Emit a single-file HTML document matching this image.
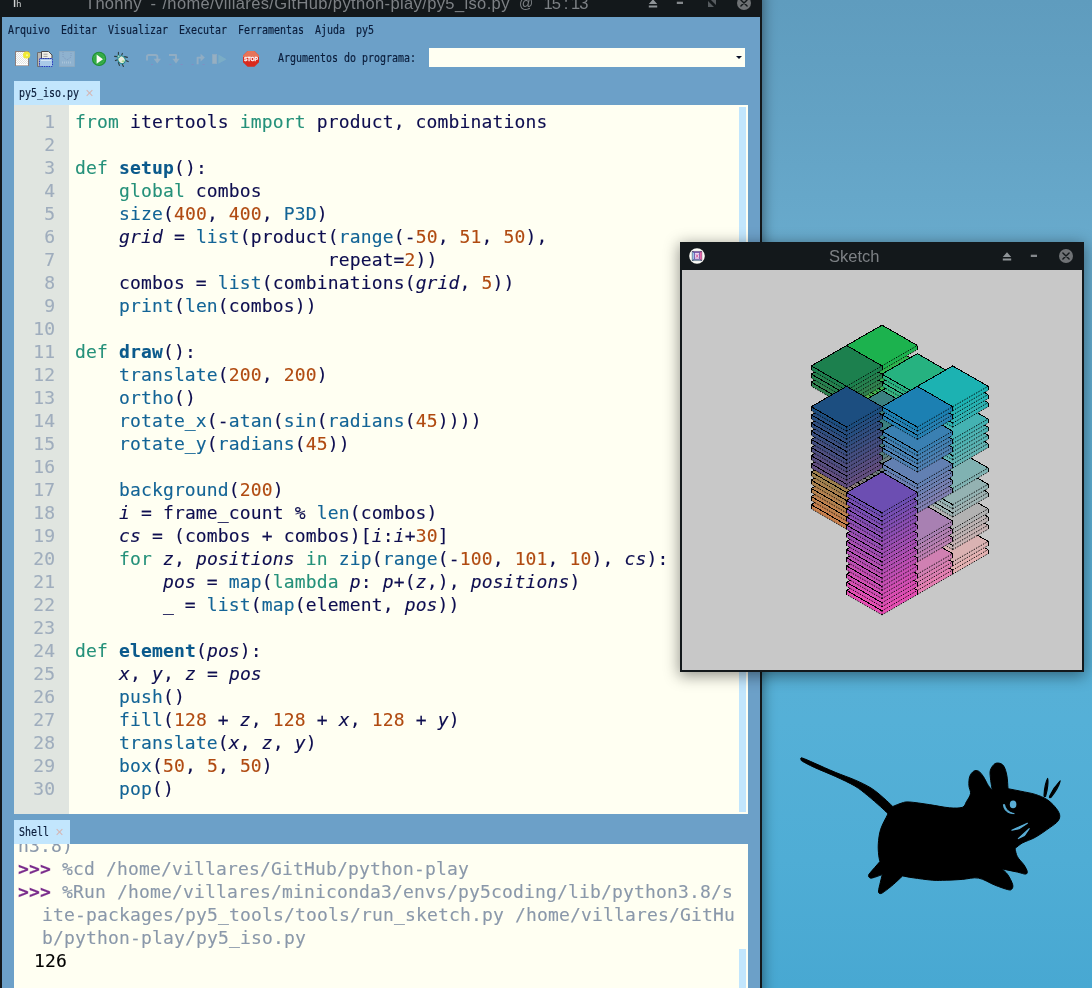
<!DOCTYPE html>
<html lang="pt-BR">
<head>
<meta charset="utf-8">
<title>Thonny - /home/villares/GitHub/python-play/py5_iso.py @ 15:13</title>
<style>
html,body{margin:0;padding:0}
body{width:1092px;height:988px;overflow:hidden;position:relative;background:#52abd3;font-family:"DejaVu Sans Mono","Liberation Mono",monospace}
#desk{position:absolute;left:0;top:0;width:1092px;height:988px;
  background:linear-gradient(180deg,#5f9cbe 0px,#63a2c4 120px,#68aacc 240px,#5eaed2 480px,#55b0d7 720px,#4fadd5 860px,#48a8d2 988px)}
#mouse{position:absolute;left:0;top:0}
#th-shadow{position:absolute;left:0;top:-11px;width:762px;height:1010px;box-shadow:0 2px 12px 1px rgba(0,0,0,.45)}
#th{will-change:transform;position:absolute;left:0;top:-11px;width:762px;height:1010px;background:#13181b}
#th-title{position:absolute;left:0;top:0;width:762px;height:28px;color:#7d8185;font-family:"Liberation Sans","DejaVu Sans",sans-serif}
.tt{position:absolute;top:3px;font-size:16.5px;line-height:22px;white-space:pre}
#th-ico{position:absolute;left:0;top:0;color:#d2d3d4;font-family:"Liberation Sans","DejaVu Sans",sans-serif}
#th-ico span{position:absolute;white-space:pre}
#th-ico .T{left:9.9px;top:3.5px;font-size:15px;line-height:17px;font-weight:normal}
#th-ico .h{left:16.2px;top:10.4px;font-size:9px;line-height:10px}
.wb{position:absolute}
#th-body{position:absolute;left:2px;top:28px;width:758px;height:982px;background:#6ca0c8;overflow:hidden}
.mi{font-family:"DejaVu Sans Mono","Liberation Mono",monospace;font-size:12px;line-height:14px;color:#0a1c3a;white-space:pre;display:inline-block;transform:scaleX(.8306);transform-origin:0 0;-webkit-text-stroke-width:.18px}
#menubar{position:absolute;left:0;top:0;width:758px;height:24px}
#menubar .mi{position:absolute;top:6px}
#toolbar{position:absolute;left:0;top:26px;width:758px;height:32px}
#arglabel{position:absolute;left:276px;top:8px}
#combo{position:absolute;left:427px;top:5px;width:316px;height:19px;background:#fffff2}
#combo i{position:absolute;right:3px;top:8px;width:0;height:0;border-left:3px solid transparent;border-right:3px solid transparent;border-top:3px solid #0a1028}
.tab{position:absolute;background:#c2e6fd;height:24px}
.tab .mi{position:absolute;left:5px;top:5px}
.tab .x{position:absolute;top:8px;width:7px;height:7px}
.tab .x:before,.tab .x:after{content:"";position:absolute;left:3px;top:-.5px;width:1px;height:8px;background:#d6b5b1}
.tab .x:before{transform:rotate(45deg)}
.tab .x:after{transform:rotate(-45deg)}
#tab1{left:12px;top:64px;width:86px}
#tab1 .x{left:72px}
#tab2{left:12px;top:803px;width:56px}
#tab2 .x{left:42px}
#editor{position:absolute;left:12px;top:88px;width:734px;height:709px;background:#fffff2;overflow:hidden}
#gutter{position:absolute;left:0;top:0;width:55px;height:709px;background:#e0e5e0}
#code{-webkit-text-stroke-width:.12px;position:absolute;left:0;top:5px;width:734px;font-size:18px;line-height:23px;letter-spacing:.15px;color:#0d0d4f}
.ln{height:23px;position:relative}
.no{position:absolute;left:0;top:0;width:41.2px;text-align:right;color:#9fadbd}
.tx{position:absolute;left:61px;top:0;white-space:pre}
.k{color:#25917a}
.f{color:#0b5a8c;font-weight:bold}
.b{color:#136496}
.n{color:#b04a10}
.v{font-style:italic}
.sb{position:absolute;left:725px;width:7px;background:#c2e6fd}
#sb1{top:2px;height:705px}
#shell{position:absolute;left:12px;top:827px;width:734px;height:160px;background:#fffff2;overflow:hidden}
#sb2{top:105px;height:60px}
#shtext{-webkit-text-stroke-width:.12px;position:absolute;left:0;top:-10px;font-size:18px;line-height:23px;letter-spacing:.163px;color:#8a98aa}
.sl{position:relative;height:23px;white-space:pre}
.pr{color:#7a2c8c;font-weight:bold}
.out{color:#000}
#sk{will-change:transform;position:absolute;left:680px;top:242px;width:404px;height:430px;background:#13181b;box-shadow:0 3px 14px 1px rgba(0,0,0,.42)}
#sk-title{position:absolute;left:0;top:0;width:404px;height:28px;color:#7d8185;font-family:"Liberation Sans","DejaVu Sans",sans-serif}
#sk-text{position:absolute;left:149px;top:3px;font-size:16.5px;line-height:22px}
#sk-ico{position:absolute;left:8px;top:5px}
#canvas{position:absolute;left:2px;top:28px}
#canvas .d{stroke-dasharray:1.3 1.4;shape-rendering:geometricPrecision}

</style>
</head>
<body>
<!-- desktop -->
<div id="desk"></div>
<svg id="mouse" width="1092" height="988" viewBox="0 0 1092 988">
<path d="M800.9 759.4C800.8 758.8 800.0 757.4 802.2 758.0C804.4 758.6 808.8 760.7 814.3 763.1C819.8 765.5 828.5 769.5 835.3 772.3C842.0 775.1 848.8 777.3 854.8 779.9C860.8 782.5 866.1 785.0 871.0 788.0C875.9 791.0 880.3 795.1 883.9 798.2C887.5 801.3 890.1 804.0 892.8 806.5C895.5 805.5 898.9 803.8 901.7 803.0C904.5 802.2 905.2 801.7 909.8 802.0C914.4 802.3 922.7 803.6 929.3 804.6C935.9 805.6 943.9 807.3 949.4 807.8C954.9 808.2 959.6 808.3 962.4 807.3C965.2 806.3 965.0 804.0 966.4 801.7C967.8 799.4 970.1 796.3 970.5 793.6C970.9 790.9 969.0 788.3 968.9 785.5C968.8 782.7 968.9 779.0 969.7 776.6C970.5 774.2 972.2 772.1 973.7 771.2C975.2 770.3 977.0 770.3 978.6 771.2C980.2 772.1 981.8 774.2 983.4 776.6C985.0 779.0 986.8 783.2 988.3 785.5C989.8 787.8 991.1 788.9 992.3 790.3C991.8 787.4 991.1 783.8 990.7 780.6C990.4 777.4 989.7 773.6 990.2 770.9C990.8 768.2 992.6 765.7 994.0 764.4C995.4 763.1 997.2 762.8 998.8 763.1C1000.4 763.4 1002.4 764.0 1003.7 766.1C1005.1 768.2 1006.2 772.0 1006.9 775.8C1007.6 779.6 1007.7 784.8 1008.0 788.7C1011.8 789.5 1016.2 790.2 1020.7 791.2C1025.2 792.2 1031.0 793.0 1035.3 794.4C1039.6 795.8 1043.4 797.3 1046.6 799.3C1049.8 801.3 1052.5 804.0 1054.7 806.5C1056.9 809.0 1059.1 812.2 1059.6 814.6C1060.1 817.0 1059.5 818.9 1057.9 821.1C1056.3 823.3 1053.6 824.9 1049.8 827.6C1046.0 830.3 1039.9 834.7 1035.3 837.3C1030.7 839.9 1025.7 841.1 1022.3 843.0C1018.9 844.9 1017.2 846.9 1015.0 848.6C1015.7 851.0 1015.9 854.0 1017.4 856.7C1018.9 859.4 1022.3 862.4 1023.9 864.8C1025.5 867.2 1026.9 869.8 1027.2 871.3C1027.5 872.8 1027.1 874.0 1025.5 874.1C1023.9 874.2 1021.3 873.0 1017.4 872.1C1013.5 871.2 1006.7 869.9 1002.1 868.9C1003.8 870.6 1006.0 872.0 1007.7 874.6C1009.5 877.2 1011.9 881.9 1012.6 884.3C1013.3 886.7 1012.6 888.2 1011.8 889.1C1011.0 890.0 1010.5 890.3 1007.7 889.6C1004.9 888.9 999.6 887.0 994.8 885.1C989.9 883.2 984.0 879.1 978.6 878.1C973.2 877.1 967.8 879.0 962.4 879.4C957.0 879.8 951.2 880.1 946.2 880.2C941.2 880.3 938.0 880.6 932.5 880.2C927.0 879.8 918.1 878.5 913.1 877.8C908.1 877.1 905.8 876.5 902.6 875.9C899.9 878.4 896.2 882.0 893.6 884.3C891.0 886.6 888.9 888.1 887.0 889.6C885.1 891.1 883.4 892.4 882.2 893.0C881.0 893.6 880.2 893.8 879.6 893.5C879.0 893.2 878.4 892.8 878.5 891.0C878.6 889.2 879.7 885.2 880.3 882.5C880.9 879.8 881.7 877.0 882.3 874.6C879.4 875.6 874.6 877.4 872.5 877.9C870.4 878.4 870.3 878.1 869.6 877.7C868.9 877.3 868.4 876.5 868.5 875.6C868.6 874.8 868.4 874.9 870.3 872.6C872.2 870.3 877.0 864.9 879.9 861.6C879.5 859.6 879.0 858.1 878.7 855.1C878.4 852.1 878.0 848.1 878.3 843.8C878.6 839.5 879.1 834.2 880.7 829.2C882.3 824.2 885.8 818.4 888.0 813.8C885.8 811.7 884.1 809.8 880.7 806.8C877.3 803.8 872.0 799.1 867.7 795.6C863.4 792.1 860.2 789.2 854.8 786.0C849.4 782.8 842.0 779.5 835.3 776.4C828.5 773.3 819.8 769.9 814.3 767.4C808.8 764.9 804.8 762.7 802.6 761.4C800.4 760.1 801.0 760.0 800.9 759.4Z" fill="#000" stroke="#000" stroke-width="1" stroke-linejoin="round"/>
<path d="M1047.6 778.4 C1048.6 781 1047.6 790 1045.6 796.3 C1044.6 797.1 1043.9 796.4 1044 795.3 C1044.3 790 1045.6 782 1047.6 778.4Z" fill="#000" stroke="#000" stroke-width="1.1" stroke-linejoin="round"/>
<path d="M1060.2 780.8 C1059.3 785 1054.5 793 1051 797.4 C1050 798.1 1049 797.4 1049.6 796.2 C1052 791 1057 784 1060.2 780.8Z" fill="#000" stroke="#000" stroke-width="1.1" stroke-linejoin="round"/>
<ellipse cx="1013.1" cy="804.4" rx="3.3" ry="3.8" fill="#5aaed6"/>
<path d="M1003.4 804.6 C1003.6 809.5 1007.5 814 1014.3 813.6 C1009 812.6 1005.6 809.5 1004.6 804.6Z" fill="#5aaed6" stroke="#5aaed6" stroke-width="0.9"/>
<path d="M1011.8 830.2 L1027.4 823.3 L1019 828.8Z" fill="#5aaed6" stroke="#5aaed6" stroke-width="1.1" stroke-linejoin="round"/>
<path d="M1018.3 838.6 L1029.2 828.7 L1024.5 835.5Z" fill="#5aaed6" stroke="#5aaed6" stroke-width="1.1" stroke-linejoin="round"/>
</svg>

<!-- Thonny window -->
<div id="th-shadow"></div>
<div id="th">
  <div id="th-title">
    <div id="th-ico"><span class="T">T</span><span class="h">h</span></div>
    <span class="tt" style="left:85px;letter-spacing:.3px">Thonny</span><span class="tt" style="left:150.6px">-</span><span class="tt" style="left:162.4px;letter-spacing:.37px">/home/villares/GitHub/python-play/py5_iso.py</span><span class="tt" style="left:519px;font-size:14px">@</span><span class="tt" style="left:543.4px;letter-spacing:-.9px">15 : 13</span>
    <svg class="wb" style="left:648px;top:10px" width="10" height="9" viewBox="0 0 10 9"><path d="M5 0.3 L9.2 5 H0.8 Z M0.8 6.4 H9.2 V8.6 H0.8 Z" fill="#8f9498"/></svg>
    <svg class="wb" style="left:676px;top:12px" width="8" height="4" viewBox="0 0 8 4"><rect x="0.8" y="0.7" width="6.2" height="2.3" fill="#84888c"/></svg>
    <svg class="wb" style="left:707px;top:9px" width="10" height="10" viewBox="0 0 10 10"><path d="M3 1 H9 V7 Z M1 3 L7 9 H1 Z" fill="#565b5f"/></svg>
    <svg class="wb" style="left:737px;top:7px" width="14" height="14" viewBox="0 0 14 14"><circle cx="7" cy="7" r="7" fill="#6f7275"/><path d="M3.9 3.9 L10.1 10.1 M10.1 3.9 L3.9 10.1" stroke="#14191c" stroke-width="1.4" stroke-linecap="round"/></svg>

  </div>
  <div id="th-body">
    <div id="menubar">
      <span class="mi" style="left:6px">Arquivo</span>
      <span class="mi" style="left:59px">Editar</span>
      <span class="mi" style="left:106px">Visualizar</span>
      <span class="mi" style="left:177px">Executar</span>
      <span class="mi" style="left:236px">Ferramentas</span>
      <span class="mi" style="left:313px">Ajuda</span>
      <span class="mi" style="left:354px">py5</span>
    </div>
    <div id="toolbar">
<svg id="icons" width="270" height="30" viewBox="0 43 270 30" style="position:absolute;left:-2px;top:0">
<defs>
<pattern id="st1" width="2" height="2" patternUnits="userSpaceOnUse"><rect width="2" height="2" fill="#fff"/><rect width="1" height="1" fill="#e3e3e0"/><rect x="1" y="1" width="1" height="1" fill="#e3e3e0"/></pattern>
</defs>
<!-- new -->
<rect x="15.5" y="51.5" width="13" height="14" fill="url(#st1)" stroke="#8b7f7e" stroke-width="1"/>
<rect x="16" y="64" width="12" height="1.4" fill="#fff"/>
<circle cx="26.6" cy="55" r="3.6" fill="#f0ea35"/>
<circle cx="27" cy="55.2" r="1" fill="#fbf7a0"/>
<!-- open -->
<path d="M37.5 52.5 H41.5 V66.5 H37.5 Z" fill="#b9b9b6" stroke="#6f6f70" stroke-width="1"/>
<path d="M41.5 51.5 H48.5 L52 55 V58.5 H41.5 Z" fill="#f1efe6" stroke="#4b4b4f" stroke-width="1" stroke-linejoin="round"/>
<path d="M43.5 54.2 H47.5 M43.5 56.4 H47.5" stroke="#9a9a98" stroke-width="0.9"/>
<rect x="39.5" y="58.5" width="13" height="8" rx="0.8" fill="#a9c9e8" stroke="#2336bd" stroke-width="1" stroke-dasharray="1.6 0.8"/>
<path d="M41 60.5 H51" stroke="#d5e6f5" stroke-width="1"/>
<!-- save (disabled) -->
<rect x="59.5" y="51.5" width="15" height="15" fill="#8fb2cf" stroke="#9aaab8" stroke-width="1" stroke-dasharray="1 1"/>
<path d="M63 52 V57 L67 60 L71 57 V52" fill="none" stroke="#7f9cc0" stroke-width="1" stroke-dasharray="1 1"/>
<path d="M62 62.5 H72" stroke="#a9c4da" stroke-width="2" stroke-dasharray="1 1"/>
<!-- run -->
<circle cx="99.1" cy="58.9" r="6.6" fill="#30a945" stroke="#1f9136" stroke-width="1.1"/>
<circle cx="99.1" cy="58.9" r="5.2" fill="none" stroke="#5dbd52" stroke-width="0.8" stroke-dasharray="1 1.2"/>
<path d="M96.6 54.6 L103 59.2 L96.6 63.8 Z" fill="#fdfdf8"/>
<!-- debug -->
<g stroke="#2b3a3c" stroke-width="1.1" fill="none" stroke-linecap="round">
<path d="M118.4 52.4 V55 M122.4 53.4 L121.6 55.4 M114.6 56.4 L117.4 56.6 M124.6 56.6 L127.4 57.4 M115.4 60.6 L117.6 59.8 M125.6 60.4 L128.2 61.6 M118.4 62.6 L119.4 65.4 M122.4 64.2 L123.4 66.4"/>
</g>
<ellipse cx="121.6" cy="59.8" rx="3.5" ry="4" transform="rotate(-35 121.6 59.8)" fill="#e6ead9" stroke="#1d8a8c" stroke-width="1.1"/>
<circle cx="118.6" cy="56.4" r="1.3" fill="#b9d7c4" stroke="#1d8a8c" stroke-width="0.8"/>
<path d="M121.4 61.4 L123.4 60 L124 62 Z" fill="#8fd070"/>
<!-- step over / into / out (disabled) -->
<g fill="none" stroke="#a9b5c0" stroke-width="1.9" stroke-linejoin="round" opacity=".62">
<path d="M147 60.4 V56.6 Q147 55 148.8 55 H155.4 Q157.4 55 157.4 57 V59.4"/>
<path d="M169 55 H176 V59.4"/>
<path d="M197.6 64.2 V57.6 H201"/>
</g>
<g fill="#a9b5c0" opacity=".62">
<path d="M153.6 58.8 H161 L157.3 63.6 Z"/>
<path d="M172.4 58.8 H179.6 L176 63.6 Z"/>
<path d="M200.6 53.8 L204.8 57.6 L200.6 61.4 Z"/>
</g>
<g fill="#8c86c0" opacity=".7">
<rect x="151" y="64" width="2" height="1"/><rect x="169.4" y="64" width="2" height="1"/><rect x="180.6" y="64" width="2" height="1"/><rect x="191.6" y="64" width="2" height="1"/><rect x="202.6" y="64" width="2" height="1"/>
</g>
<!-- resume (disabled) -->
<rect x="212.6" y="54.6" width="4" height="9" fill="#a9b6c0" stroke="#9fb0bd" stroke-width="0.8" opacity=".7"/>
<path d="M218.4 54.6 L226.6 59.2 L218.4 63.8 Z" fill="#86b5c4" opacity=".6"/>
<!-- stop -->
<path d="M247.6 51 H254.4 L259 55.6 V62.2 L254.4 66.8 H247.6 L243 62.2 V55.6 Z" fill="#d92a1e"/>
<path d="M247.6 51 H254.4 L259 55.6 V57 H243 V55.6 Z" fill="#e6745a"/>
<text x="251" y="61.4" text-anchor="middle" font-family="Liberation Sans, DejaVu Sans, sans-serif" font-weight="bold" font-size="5.6" fill="#fff" textLength="14" lengthAdjust="spacingAndGlyphs" stroke="#fff" stroke-width="0.3">STOP</text>
</svg>

      <span class="mi" id="arglabel">Argumentos do programa:</span>
      <div id="combo"><i></i></div>
    </div>
    <div class="tab" id="tab1"><span class="mi">py5_iso.py</span><b class="x"></b></div>
    <div id="editor">
      <div id="gutter"></div>
      <div id="code">
<div class="ln"><span class="no">1</span><span class="tx"><span class="k">from</span> itertools <span class="k">import</span> product, combinations</span></div>
<div class="ln"><span class="no">2</span><span class="tx"></span></div>
<div class="ln"><span class="no">3</span><span class="tx"><span class="k">def</span> <span class="f">setup</span>():</span></div>
<div class="ln"><span class="no">4</span><span class="tx">    <span class="k">global</span> combos</span></div>
<div class="ln"><span class="no">5</span><span class="tx">    <span class="b">size</span>(<span class="n">400</span>, <span class="n">400</span>, <span class="b">P3D</span>)</span></div>
<div class="ln"><span class="no">6</span><span class="tx">    <span class="v">grid</span> = <span class="b">list</span>(product(<span class="b">range</span>(-<span class="n">50</span>, <span class="n">51</span>, <span class="n">50</span>),</span></div>
<div class="ln"><span class="no">7</span><span class="tx">                       repeat=<span class="n">2</span>))</span></div>
<div class="ln"><span class="no">8</span><span class="tx">    combos = <span class="b">list</span>(combinations(<span class="v">grid</span>, <span class="n">5</span>))</span></div>
<div class="ln"><span class="no">9</span><span class="tx">    <span class="b">print</span>(<span class="b">len</span>(combos))</span></div>
<div class="ln"><span class="no">10</span><span class="tx"></span></div>
<div class="ln"><span class="no">11</span><span class="tx"><span class="k">def</span> <span class="f">draw</span>():</span></div>
<div class="ln"><span class="no">12</span><span class="tx">    <span class="b">translate</span>(<span class="n">200</span>, <span class="n">200</span>)</span></div>
<div class="ln"><span class="no">13</span><span class="tx">    <span class="b">ortho</span>()</span></div>
<div class="ln"><span class="no">14</span><span class="tx">    <span class="b">rotate_x</span>(-<span class="b">atan</span>(<span class="b">sin</span>(<span class="b">radians</span>(<span class="n">45</span>))))</span></div>
<div class="ln"><span class="no">15</span><span class="tx">    <span class="b">rotate_y</span>(<span class="b">radians</span>(<span class="n">45</span>))</span></div>
<div class="ln"><span class="no">16</span><span class="tx"></span></div>
<div class="ln"><span class="no">17</span><span class="tx">    <span class="b">background</span>(<span class="n">200</span>)</span></div>
<div class="ln"><span class="no">18</span><span class="tx">    <span class="v">i</span> = frame_count % <span class="b">len</span>(combos)</span></div>
<div class="ln"><span class="no">19</span><span class="tx">    <span class="v">cs</span> = (combos + combos)[<span class="v">i</span>:<span class="v">i</span>+<span class="n">30</span>]</span></div>
<div class="ln"><span class="no">20</span><span class="tx">    <span class="k">for</span> <span class="v">z</span>, <span class="v">positions</span> <span class="k">in</span> <span class="b">zip</span>(<span class="b">range</span>(-<span class="n">100</span>, <span class="n">101</span>, <span class="n">10</span>), <span class="v">cs</span>):</span></div>
<div class="ln"><span class="no">21</span><span class="tx">        <span class="v">pos</span> = <span class="b">map</span>(<span class="k">lambda</span> <span class="v">p</span>: <span class="v">p</span>+(<span class="v">z</span>,), <span class="v">positions</span>)</span></div>
<div class="ln"><span class="no">22</span><span class="tx">        _ = <span class="b">list</span>(<span class="b">map</span>(element, <span class="v">pos</span>))</span></div>
<div class="ln"><span class="no">23</span><span class="tx"></span></div>
<div class="ln"><span class="no">24</span><span class="tx"><span class="k">def</span> <span class="f">element</span>(<span class="v">pos</span>):</span></div>
<div class="ln"><span class="no">25</span><span class="tx">    <span class="v">x</span>, <span class="v">y</span>, <span class="v">z</span> = <span class="v">pos</span></span></div>
<div class="ln"><span class="no">26</span><span class="tx">    <span class="b">push</span>()</span></div>
<div class="ln"><span class="no">27</span><span class="tx">    <span class="b">fill</span>(<span class="n">128</span> + <span class="v">z</span>, <span class="n">128</span> + <span class="v">x</span>, <span class="n">128</span> + <span class="v">y</span>)</span></div>
<div class="ln"><span class="no">28</span><span class="tx">    <span class="b">translate</span>(<span class="v">x</span>, <span class="v">z</span>, <span class="v">y</span>)</span></div>
<div class="ln"><span class="no">29</span><span class="tx">    <span class="b">box</span>(<span class="n">50</span>, <span class="n">5</span>, <span class="n">50</span>)</span></div>
<div class="ln"><span class="no">30</span><span class="tx">    <span class="b">pop</span>()</span></div>

      </div>
      <div class="sb" id="sb1"></div>
    </div>
    <div class="tab" id="tab2"><span class="mi">Shell</span><b class="x"></b></div>
    <div id="shell">
      <div id="shtext">
<div class="sl" style="left:4px">n3.8)</div>
<div class="sl" style="left:4px"><b class="pr">&gt;&gt;&gt; </b>%cd /home/villares/GitHub/python-play</div>
<div class="sl" style="left:4px"><b class="pr">&gt;&gt;&gt; </b>%Run /home/villares/miniconda3/envs/py5coding/lib/python3.8/s</div>
<div class="sl" style="left:28px">ite-packages/py5_tools/tools/run_sketch.py /home/villares/GitHu</div>
<div class="sl" style="left:28px">b/python-play/py5_iso.py</div>
<div class="sl out" style="left:20px">126</div>
      </div>
      <div class="sb" id="sb2"></div>
    </div>
  </div>
</div>

<!-- Sketch window -->
<div id="sk">
  <div id="sk-title">
    <svg id="sk-ico" width="18" height="18" viewBox="0 0 18 18"><circle cx="9" cy="9" r="7.8" fill="#fbfbf6"/><path d="M4.2 4.4 L6.6 5.6 V12.2 L4.2 13.6 Z" fill="#9cc3ea" stroke="#2a3c58" stroke-width=".5"/><path d="M4.2 4.4 H13.8 L11.6 5.6 H6.6 Z" fill="#8a58b8" stroke="#3a2a60" stroke-width=".5"/><path d="M13.8 4.4 V13.6 L11.6 12.2 V5.6 Z" fill="#f068b0" stroke="#6a2a58" stroke-width=".5"/><path d="M4.2 13.6 H13.8 L11.6 12.2 H6.6 Z" fill="#a8d2e6" stroke="#2a3c58" stroke-width=".5"/><rect x="6.6" y="5.6" width="5" height="6.6" fill="#e6d2ee" stroke="#6848a8" stroke-width=".7"/><path d="M8 7.4 L10.2 10.6 M10.2 7.4 L8 10.6" stroke="#d85090" stroke-width=".8"/></svg>
    <span id="sk-text">Sketch</span>
    <svg class="wb" style="left:322px;top:10px" width="10" height="9" viewBox="0 0 10 9"><path d="M5 0.3 L9.2 5 H0.8 Z M0.8 6.4 H9.2 V8.6 H0.8 Z" fill="#8f9498"/></svg>
    <svg class="wb" style="left:350px;top:12px" width="8" height="4" viewBox="0 0 8 4"><rect x="0.8" y="0.7" width="6.2" height="2.3" fill="#84888c"/></svg>
    <svg class="wb" style="left:379px;top:7px" width="14" height="14" viewBox="0 0 14 14"><circle cx="7" cy="7" r="7" fill="#6f7275"/><path d="M3.9 3.9 L10.1 10.1 M10.1 3.9 L3.9 10.1" stroke="#14191c" stroke-width="1.4" stroke-linecap="round"/></svg>
  </div>
  <svg id="canvas" width="400" height="400" viewBox="0 0 400 400" shape-rendering="crispEdges">
    <rect width="400" height="400" fill="#c8c8c8"/>
    <g stroke="#000" stroke-width="1" fill="none" stroke-linejoin="round">
<path fill="#e4b280" stroke="none" d="M235.4 238.8L270.7 259.2L270.7 263.3L235.4 283.7L200.0 263.3L200.0 259.2Z"/><path d="M270.7 259.2L235.4 238.8L200.0 259.2L235.4 279.6M200.0 259.2L200.0 263.3M270.7 259.2L270.7 263.3"/><path class="d" d="M235.4 279.6L270.7 259.2M235.4 283.7L200.0 263.3M235.4 283.7L270.7 263.3M235.4 279.6L235.4 283.7"/>
<path fill="#e48080" stroke="none" d="M200.0 259.2L235.4 279.6L235.4 283.7L200.0 304.1L164.6 283.7L164.6 279.6Z"/><path d="M235.4 279.6L200.0 259.2L164.6 279.6L200.0 300.0M164.6 279.6L164.6 283.7M235.4 279.6L235.4 283.7"/><path class="d" d="M200.0 300.0L235.4 279.6M200.0 304.1L164.6 283.7M200.0 304.1L235.4 283.7M200.0 300.0L200.0 304.1"/>
<path fill="#e4b2b2" stroke="none" d="M270.7 259.2L306.1 279.6L306.1 283.7L270.7 304.1L235.4 283.7L235.4 279.6Z"/><path d="M306.1 279.6L270.7 259.2L235.4 279.6L270.7 300.0M235.4 279.6L235.4 283.7M306.1 279.6L306.1 283.7"/><path class="d" d="M270.7 300.0L306.1 279.6M270.7 304.1L235.4 283.7M270.7 304.1L306.1 283.7M270.7 300.0L270.7 304.1"/>
<path fill="#e480b2" stroke="none" d="M235.4 279.6L270.7 300.0L270.7 304.1L235.4 324.5L200.0 304.1L200.0 300.0Z"/><path d="M270.7 300.0L235.4 279.6L200.0 300.0L235.4 320.4M200.0 300.0L200.0 304.1M270.7 300.0L270.7 304.1"/><path class="d" d="M235.4 320.4L270.7 300.0M235.4 324.5L200.0 304.1M235.4 324.5L270.7 304.1M235.4 320.4L235.4 324.5"/>
<path fill="#e44eb2" stroke="none" d="M200.0 300.0L235.4 320.4L235.4 324.5L200.0 344.9L164.6 324.5L164.6 320.4Z"/><path d="M235.4 320.4L200.0 300.0L164.6 320.4L200.0 340.8M164.6 320.4L164.6 324.5M235.4 320.4L235.4 324.5"/><path class="d" d="M200.0 340.8L235.4 320.4M200.0 344.9L164.6 324.5M200.0 344.9L235.4 324.5M200.0 340.8L200.0 344.9"/>
<path fill="#dab24e" stroke="none" d="M200.0 210.2L235.4 230.6L235.4 234.7L200.0 255.1L164.6 234.7L164.6 230.6Z"/><path d="M235.4 230.6L200.0 210.2L164.6 230.6L200.0 251.0M164.6 230.6L164.6 234.7M235.4 230.6L235.4 234.7"/><path class="d" d="M200.0 251.0L235.4 230.6M200.0 255.1L164.6 234.7M200.0 255.1L235.4 234.7M200.0 251.0L200.0 255.1"/>
<path fill="#da8080" stroke="none" d="M200.0 251.0L235.4 271.4L235.4 275.5L200.0 295.9L164.6 275.5L164.6 271.4Z"/><path d="M235.4 271.4L200.0 251.0L164.6 271.4L200.0 291.9M164.6 271.4L164.6 275.5M235.4 271.4L235.4 275.5"/><path class="d" d="M200.0 291.9L235.4 271.4M200.0 295.9L164.6 275.5M200.0 295.9L235.4 275.5M200.0 291.9L200.0 295.9"/>
<path fill="#dab2b2" stroke="none" d="M270.7 251.0L306.1 271.4L306.1 275.5L270.7 295.9L235.4 275.5L235.4 271.4Z"/><path d="M306.1 271.4L270.7 251.0L235.4 271.4L270.7 291.9M235.4 271.4L235.4 275.5M306.1 271.4L306.1 275.5"/><path class="d" d="M270.7 291.9L306.1 271.4M270.7 295.9L235.4 275.5M270.7 295.9L306.1 275.5M270.7 291.9L270.7 295.9"/>
<path fill="#da80b2" stroke="none" d="M235.4 271.4L270.7 291.9L270.7 295.9L235.4 316.4L200.0 295.9L200.0 291.9Z"/><path d="M270.7 291.9L235.4 271.4L200.0 291.9L235.4 312.3M200.0 291.9L200.0 295.9M270.7 291.9L270.7 295.9"/><path class="d" d="M235.4 312.3L270.7 291.9M235.4 316.4L200.0 295.9M235.4 316.4L270.7 295.9M235.4 312.3L235.4 316.4"/>
<path fill="#da4eb2" stroke="none" d="M200.0 291.9L235.4 312.3L235.4 316.4L200.0 336.8L164.6 316.4L164.6 312.3Z"/><path d="M235.4 312.3L200.0 291.9L164.6 312.3L200.0 332.7M164.6 312.3L164.6 316.4M235.4 312.3L235.4 316.4"/><path class="d" d="M200.0 332.7L235.4 312.3M200.0 336.8L164.6 316.4M200.0 336.8L235.4 316.4M200.0 332.7L200.0 336.8"/>
<path fill="#d0b24e" stroke="none" d="M200.0 202.0L235.4 222.5L235.4 226.5L200.0 246.9L164.6 226.5L164.6 222.5Z"/><path d="M235.4 222.5L200.0 202.0L164.6 222.5L200.0 242.9M164.6 222.5L164.6 226.5M235.4 222.5L235.4 226.5"/><path class="d" d="M200.0 242.9L235.4 222.5M200.0 246.9L164.6 226.5M200.0 246.9L235.4 226.5M200.0 242.9L200.0 246.9"/>
<path fill="#d0b280" stroke="none" d="M235.4 222.5L270.7 242.9L270.7 246.9L235.4 267.4L200.0 246.9L200.0 242.9Z"/><path d="M270.7 242.9L235.4 222.5L200.0 242.9L235.4 263.3M200.0 242.9L200.0 246.9M270.7 242.9L270.7 246.9"/><path class="d" d="M235.4 263.3L270.7 242.9M235.4 267.4L200.0 246.9M235.4 267.4L270.7 246.9M235.4 263.3L235.4 267.4"/>
<path fill="#d08080" stroke="none" d="M200.0 242.9L235.4 263.3L235.4 267.4L200.0 287.8L164.6 267.4L164.6 263.3Z"/><path d="M235.4 263.3L200.0 242.9L164.6 263.3L200.0 283.7M164.6 263.3L164.6 267.4M235.4 263.3L235.4 267.4"/><path class="d" d="M200.0 283.7L235.4 263.3M200.0 287.8L164.6 267.4M200.0 287.8L235.4 267.4M200.0 283.7L200.0 287.8"/>
<path fill="#d080b2" stroke="none" d="M235.4 263.3L270.7 283.7L270.7 287.8L235.4 308.2L200.0 287.8L200.0 283.7Z"/><path d="M270.7 283.7L235.4 263.3L200.0 283.7L235.4 304.1M200.0 283.7L200.0 287.8M270.7 283.7L270.7 287.8"/><path class="d" d="M235.4 304.1L270.7 283.7M235.4 308.2L200.0 287.8M235.4 308.2L270.7 287.8M235.4 304.1L235.4 308.2"/>
<path fill="#d04eb2" stroke="none" d="M200.0 283.7L235.4 304.1L235.4 308.2L200.0 328.6L164.6 308.2L164.6 304.1Z"/><path d="M235.4 304.1L200.0 283.7L164.6 304.1L200.0 324.5M164.6 304.1L164.6 308.2M235.4 304.1L235.4 308.2"/><path class="d" d="M200.0 324.5L235.4 304.1M200.0 328.6L164.6 308.2M200.0 328.6L235.4 308.2M200.0 324.5L200.0 328.6"/>
<path fill="#c6b24e" stroke="none" d="M200.0 193.9L235.4 214.3L235.4 218.4L200.0 238.8L164.6 218.4L164.6 214.3Z"/><path d="M235.4 214.3L200.0 193.9L164.6 214.3L200.0 234.7M164.6 214.3L164.6 218.4M235.4 214.3L235.4 218.4"/><path class="d" d="M200.0 234.7L235.4 214.3M200.0 238.8L164.6 218.4M200.0 238.8L235.4 218.4M200.0 234.7L200.0 238.8"/>
<path fill="#c6804e" stroke="none" d="M164.6 214.3L200.0 234.7L200.0 238.8L164.6 259.2L129.3 238.8L129.3 234.7Z"/><path d="M200.0 234.7L164.6 214.3L129.3 234.7L164.6 255.1M129.3 234.7L129.3 238.8M200.0 234.7L200.0 238.8"/><path class="d" d="M164.6 255.1L200.0 234.7M164.6 259.2L129.3 238.8M164.6 259.2L200.0 238.8M164.6 255.1L164.6 259.2"/>
<path fill="#c6b280" stroke="none" d="M235.4 214.3L270.7 234.7L270.7 238.8L235.4 259.2L200.0 238.8L200.0 234.7Z"/><path d="M270.7 234.7L235.4 214.3L200.0 234.7L235.4 255.1M200.0 234.7L200.0 238.8M270.7 234.7L270.7 238.8"/><path class="d" d="M235.4 255.1L270.7 234.7M235.4 259.2L200.0 238.8M235.4 259.2L270.7 238.8M235.4 255.1L235.4 259.2"/>
<path fill="#c6b2b2" stroke="none" d="M270.7 234.7L306.1 255.1L306.1 259.2L270.7 279.6L235.4 259.2L235.4 255.1Z"/><path d="M306.1 255.1L270.7 234.7L235.4 255.1L270.7 275.5M235.4 255.1L235.4 259.2M306.1 255.1L306.1 259.2"/><path class="d" d="M270.7 275.5L306.1 255.1M270.7 279.6L235.4 259.2M270.7 279.6L306.1 259.2M270.7 275.5L270.7 279.6"/>
<path fill="#c64eb2" stroke="none" d="M200.0 275.5L235.4 295.9L235.4 300.0L200.0 320.4L164.6 300.0L164.6 295.9Z"/><path d="M235.4 295.9L200.0 275.5L164.6 295.9L200.0 316.4M164.6 295.9L164.6 300.0M235.4 295.9L235.4 300.0"/><path class="d" d="M200.0 316.4L235.4 295.9M200.0 320.4L164.6 300.0M200.0 320.4L235.4 300.0M200.0 316.4L200.0 320.4"/>
<path fill="#bc804e" stroke="none" d="M164.6 206.1L200.0 226.5L200.0 230.6L164.6 251.0L129.3 230.6L129.3 226.5Z"/><path d="M200.0 226.5L164.6 206.1L129.3 226.5L164.6 246.9M129.3 226.5L129.3 230.6M200.0 226.5L200.0 230.6"/><path class="d" d="M164.6 246.9L200.0 226.5M164.6 251.0L129.3 230.6M164.6 251.0L200.0 230.6M164.6 246.9L164.6 251.0"/>
<path fill="#bcb280" stroke="none" d="M235.4 206.1L270.7 226.5L270.7 230.6L235.4 251.0L200.0 230.6L200.0 226.5Z"/><path d="M270.7 226.5L235.4 206.1L200.0 226.5L235.4 246.9M200.0 226.5L200.0 230.6M270.7 226.5L270.7 230.6"/><path class="d" d="M235.4 246.9L270.7 226.5M235.4 251.0L200.0 230.6M235.4 251.0L270.7 230.6M235.4 246.9L235.4 251.0"/>
<path fill="#bcb2b2" stroke="none" d="M270.7 226.5L306.1 246.9L306.1 251.0L270.7 271.4L235.4 251.0L235.4 246.9Z"/><path d="M306.1 246.9L270.7 226.5L235.4 246.9L270.7 267.4M235.4 246.9L235.4 251.0M306.1 246.9L306.1 251.0"/><path class="d" d="M270.7 267.4L306.1 246.9M270.7 271.4L235.4 251.0M270.7 271.4L306.1 251.0M270.7 267.4L270.7 271.4"/>
<path fill="#bc80b2" stroke="none" d="M235.4 246.9L270.7 267.4L270.7 271.4L235.4 291.9L200.0 271.4L200.0 267.4Z"/><path d="M270.7 267.4L235.4 246.9L200.0 267.4L235.4 287.8M200.0 267.4L200.0 271.4M270.7 267.4L270.7 271.4"/><path class="d" d="M235.4 287.8L270.7 267.4M235.4 291.9L200.0 271.4M235.4 291.9L270.7 271.4M235.4 287.8L235.4 291.9"/>
<path fill="#bc4eb2" stroke="none" d="M200.0 267.4L235.4 287.8L235.4 291.9L200.0 312.3L164.6 291.9L164.6 287.8Z"/><path d="M235.4 287.8L200.0 267.4L164.6 287.8L200.0 308.2M164.6 287.8L164.6 291.9M235.4 287.8L235.4 291.9"/><path class="d" d="M200.0 308.2L235.4 287.8M200.0 312.3L164.6 291.9M200.0 312.3L235.4 291.9M200.0 308.2L200.0 312.3"/>
<path fill="#b2b24e" stroke="none" d="M200.0 177.5L235.4 198.0L235.4 202.0L200.0 222.5L164.6 202.0L164.6 198.0Z"/><path d="M235.4 198.0L200.0 177.5L164.6 198.0L200.0 218.4M164.6 198.0L164.6 202.0M235.4 198.0L235.4 202.0"/><path class="d" d="M200.0 218.4L235.4 198.0M200.0 222.5L164.6 202.0M200.0 222.5L235.4 202.0M200.0 218.4L200.0 222.5"/>
<path fill="#b2804e" stroke="none" d="M164.6 198.0L200.0 218.4L200.0 222.5L164.6 242.9L129.3 222.5L129.3 218.4Z"/><path d="M200.0 218.4L164.6 198.0L129.3 218.4L164.6 238.8M129.3 218.4L129.3 222.5M200.0 218.4L200.0 222.5"/><path class="d" d="M164.6 238.8L200.0 218.4M164.6 242.9L129.3 222.5M164.6 242.9L200.0 222.5M164.6 238.8L164.6 242.9"/>
<path fill="#b2b2b2" stroke="none" d="M270.7 218.4L306.1 238.8L306.1 242.9L270.7 263.3L235.4 242.9L235.4 238.8Z"/><path d="M306.1 238.8L270.7 218.4L235.4 238.8L270.7 259.2M235.4 238.8L235.4 242.9M306.1 238.8L306.1 242.9"/><path class="d" d="M270.7 259.2L306.1 238.8M270.7 263.3L235.4 242.9M270.7 263.3L306.1 242.9M270.7 259.2L270.7 263.3"/>
<path fill="#b280b2" stroke="none" d="M235.4 238.8L270.7 259.2L270.7 263.3L235.4 283.7L200.0 263.3L200.0 259.2Z"/><path d="M270.7 259.2L235.4 238.8L200.0 259.2L235.4 279.6M200.0 259.2L200.0 263.3M270.7 259.2L270.7 263.3"/><path class="d" d="M235.4 279.6L270.7 259.2M235.4 283.7L200.0 263.3M235.4 283.7L270.7 263.3M235.4 279.6L235.4 283.7"/>
<path fill="#b24eb2" stroke="none" d="M200.0 259.2L235.4 279.6L235.4 283.7L200.0 304.1L164.6 283.7L164.6 279.6Z"/><path d="M235.4 279.6L200.0 259.2L164.6 279.6L200.0 300.0M164.6 279.6L164.6 283.7M235.4 279.6L235.4 283.7"/><path class="d" d="M200.0 300.0L235.4 279.6M200.0 304.1L164.6 283.7M200.0 304.1L235.4 283.7M200.0 300.0L200.0 304.1"/>
<path fill="#a8b24e" stroke="none" d="M200.0 169.4L235.4 189.8L235.4 193.9L200.0 214.3L164.6 193.9L164.6 189.8Z"/><path d="M235.4 189.8L200.0 169.4L164.6 189.8L200.0 210.2M164.6 189.8L164.6 193.9M235.4 189.8L235.4 193.9"/><path class="d" d="M200.0 210.2L235.4 189.8M200.0 214.3L164.6 193.9M200.0 214.3L235.4 193.9M200.0 210.2L200.0 214.3"/>
<path fill="#a8804e" stroke="none" d="M164.6 189.8L200.0 210.2L200.0 214.3L164.6 234.7L129.3 214.3L129.3 210.2Z"/><path d="M200.0 210.2L164.6 189.8L129.3 210.2L164.6 230.6M129.3 210.2L129.3 214.3M200.0 210.2L200.0 214.3"/><path class="d" d="M164.6 230.6L200.0 210.2M164.6 234.7L129.3 214.3M164.6 234.7L200.0 214.3M164.6 230.6L164.6 234.7"/>
<path fill="#a8b280" stroke="none" d="M235.4 189.8L270.7 210.2L270.7 214.3L235.4 234.7L200.0 214.3L200.0 210.2Z"/><path d="M270.7 210.2L235.4 189.8L200.0 210.2L235.4 230.6M200.0 210.2L200.0 214.3M270.7 210.2L270.7 214.3"/><path class="d" d="M235.4 230.6L270.7 210.2M235.4 234.7L200.0 214.3M235.4 234.7L270.7 214.3M235.4 230.6L235.4 234.7"/>
<path fill="#a880b2" stroke="none" d="M235.4 230.6L270.7 251.0L270.7 255.1L235.4 275.5L200.0 255.1L200.0 251.0Z"/><path d="M270.7 251.0L235.4 230.6L200.0 251.0L235.4 271.4M200.0 251.0L200.0 255.1M270.7 251.0L270.7 255.1"/><path class="d" d="M235.4 271.4L270.7 251.0M235.4 275.5L200.0 255.1M235.4 275.5L270.7 255.1M235.4 271.4L235.4 275.5"/>
<path fill="#a84eb2" stroke="none" d="M200.0 251.0L235.4 271.4L235.4 275.5L200.0 295.9L164.6 275.5L164.6 271.4Z"/><path d="M235.4 271.4L200.0 251.0L164.6 271.4L200.0 291.9M164.6 271.4L164.6 275.5M235.4 271.4L235.4 275.5"/><path class="d" d="M200.0 291.9L235.4 271.4M200.0 295.9L164.6 275.5M200.0 295.9L235.4 275.5M200.0 291.9L200.0 295.9"/>
<path fill="#9e804e" stroke="none" d="M164.6 181.6L200.0 202.0L200.0 206.1L164.6 226.5L129.3 206.1L129.3 202.0Z"/><path d="M200.0 202.0L164.6 181.6L129.3 202.0L164.6 222.5M129.3 202.0L129.3 206.1M200.0 202.0L200.0 206.1"/><path class="d" d="M164.6 222.5L200.0 202.0M164.6 226.5L129.3 206.1M164.6 226.5L200.0 206.1M164.6 222.5L164.6 226.5"/>
<path fill="#9eb280" stroke="none" d="M235.4 181.6L270.7 202.0L270.7 206.1L235.4 226.5L200.0 206.1L200.0 202.0Z"/><path d="M270.7 202.0L235.4 181.6L200.0 202.0L235.4 222.5M200.0 202.0L200.0 206.1M270.7 202.0L270.7 206.1"/><path class="d" d="M235.4 222.5L270.7 202.0M235.4 226.5L200.0 206.1M235.4 226.5L270.7 206.1M235.4 222.5L235.4 226.5"/>
<path fill="#9e8080" stroke="none" d="M200.0 202.0L235.4 222.5L235.4 226.5L200.0 246.9L164.6 226.5L164.6 222.5Z"/><path d="M235.4 222.5L200.0 202.0L164.6 222.5L200.0 242.9M164.6 222.5L164.6 226.5M235.4 222.5L235.4 226.5"/><path class="d" d="M200.0 242.9L235.4 222.5M200.0 246.9L164.6 226.5M200.0 246.9L235.4 226.5M200.0 242.9L200.0 246.9"/>
<path fill="#9eb2b2" stroke="none" d="M270.7 202.0L306.1 222.5L306.1 226.5L270.7 246.9L235.4 226.5L235.4 222.5Z"/><path d="M306.1 222.5L270.7 202.0L235.4 222.5L270.7 242.9M235.4 222.5L235.4 226.5M306.1 222.5L306.1 226.5"/><path class="d" d="M270.7 242.9L306.1 222.5M270.7 246.9L235.4 226.5M270.7 246.9L306.1 226.5M270.7 242.9L270.7 246.9"/>
<path fill="#9e4eb2" stroke="none" d="M200.0 242.9L235.4 263.3L235.4 267.4L200.0 287.8L164.6 267.4L164.6 263.3Z"/><path d="M235.4 263.3L200.0 242.9L164.6 263.3L200.0 283.7M164.6 263.3L164.6 267.4M235.4 263.3L235.4 267.4"/><path class="d" d="M200.0 283.7L235.4 263.3M200.0 287.8L164.6 267.4M200.0 287.8L235.4 267.4M200.0 283.7L200.0 287.8"/>
<path fill="#94b24e" stroke="none" d="M200.0 153.1L235.4 173.5L235.4 177.5L200.0 198.0L164.6 177.5L164.6 173.5Z"/><path d="M235.4 173.5L200.0 153.1L164.6 173.5L200.0 193.9M164.6 173.5L164.6 177.5M235.4 173.5L235.4 177.5"/><path class="d" d="M200.0 193.9L235.4 173.5M200.0 198.0L164.6 177.5M200.0 198.0L235.4 177.5M200.0 193.9L200.0 198.0"/>
<path fill="#94804e" stroke="none" d="M164.6 173.5L200.0 193.9L200.0 198.0L164.6 218.4L129.3 198.0L129.3 193.9Z"/><path d="M200.0 193.9L164.6 173.5L129.3 193.9L164.6 214.3M129.3 193.9L129.3 198.0M200.0 193.9L200.0 198.0"/><path class="d" d="M164.6 214.3L200.0 193.9M164.6 218.4L129.3 198.0M164.6 218.4L200.0 198.0M164.6 214.3L164.6 218.4"/>
<path fill="#948080" stroke="none" d="M200.0 193.9L235.4 214.3L235.4 218.4L200.0 238.8L164.6 218.4L164.6 214.3Z"/><path d="M235.4 214.3L200.0 193.9L164.6 214.3L200.0 234.7M164.6 214.3L164.6 218.4M235.4 214.3L235.4 218.4"/><path class="d" d="M200.0 234.7L235.4 214.3M200.0 238.8L164.6 218.4M200.0 238.8L235.4 218.4M200.0 234.7L200.0 238.8"/>
<path fill="#94b2b2" stroke="none" d="M270.7 193.9L306.1 214.3L306.1 218.4L270.7 238.8L235.4 218.4L235.4 214.3Z"/><path d="M306.1 214.3L270.7 193.9L235.4 214.3L270.7 234.7M235.4 214.3L235.4 218.4M306.1 214.3L306.1 218.4"/><path class="d" d="M270.7 234.7L306.1 214.3M270.7 238.8L235.4 218.4M270.7 238.8L306.1 218.4M270.7 234.7L270.7 238.8"/>
<path fill="#944eb2" stroke="none" d="M200.0 234.7L235.4 255.1L235.4 259.2L200.0 279.6L164.6 259.2L164.6 255.1Z"/><path d="M235.4 255.1L200.0 234.7L164.6 255.1L200.0 275.5M164.6 255.1L164.6 259.2M235.4 255.1L235.4 259.2"/><path class="d" d="M200.0 275.5L235.4 255.1M200.0 279.6L164.6 259.2M200.0 279.6L235.4 259.2M200.0 275.5L200.0 279.6"/>
<path fill="#8ab24e" stroke="none" d="M200.0 144.9L235.4 165.3L235.4 169.4L200.0 189.8L164.6 169.4L164.6 165.3Z"/><path d="M235.4 165.3L200.0 144.9L164.6 165.3L200.0 185.7M164.6 165.3L164.6 169.4M235.4 165.3L235.4 169.4"/><path class="d" d="M200.0 185.7L235.4 165.3M200.0 189.8L164.6 169.4M200.0 189.8L235.4 169.4M200.0 185.7L200.0 189.8"/>
<path fill="#8a804e" stroke="none" d="M164.6 165.3L200.0 185.7L200.0 189.8L164.6 210.2L129.3 189.8L129.3 185.7Z"/><path d="M200.0 185.7L164.6 165.3L129.3 185.7L164.6 206.1M129.3 185.7L129.3 189.8M200.0 185.7L200.0 189.8"/><path class="d" d="M164.6 206.1L200.0 185.7M164.6 210.2L129.3 189.8M164.6 210.2L200.0 189.8M164.6 206.1L164.6 210.2"/>
<path fill="#8ab280" stroke="none" d="M235.4 165.3L270.7 185.7L270.7 189.8L235.4 210.2L200.0 189.8L200.0 185.7Z"/><path d="M270.7 185.7L235.4 165.3L200.0 185.7L235.4 206.1M200.0 185.7L200.0 189.8M270.7 185.7L270.7 189.8"/><path class="d" d="M235.4 206.1L270.7 185.7M235.4 210.2L200.0 189.8M235.4 210.2L270.7 189.8M235.4 206.1L235.4 210.2"/>
<path fill="#8a8080" stroke="none" d="M200.0 185.7L235.4 206.1L235.4 210.2L200.0 230.6L164.6 210.2L164.6 206.1Z"/><path d="M235.4 206.1L200.0 185.7L164.6 206.1L200.0 226.5M164.6 206.1L164.6 210.2M235.4 206.1L235.4 210.2"/><path class="d" d="M200.0 226.5L235.4 206.1M200.0 230.6L164.6 210.2M200.0 230.6L235.4 210.2M200.0 226.5L200.0 230.6"/>
<path fill="#8a4eb2" stroke="none" d="M200.0 226.5L235.4 246.9L235.4 251.0L200.0 271.4L164.6 251.0L164.6 246.9Z"/><path d="M235.4 246.9L200.0 226.5L164.6 246.9L200.0 267.4M164.6 246.9L164.6 251.0M235.4 246.9L235.4 251.0"/><path class="d" d="M200.0 267.4L235.4 246.9M200.0 271.4L164.6 251.0M200.0 271.4L235.4 251.0M200.0 267.4L200.0 271.4"/>
<path fill="#80804e" stroke="none" d="M164.6 157.1L200.0 177.5L200.0 181.6L164.6 202.0L129.3 181.6L129.3 177.5Z"/><path d="M200.0 177.5L164.6 157.1L129.3 177.5L164.6 198.0M129.3 177.5L129.3 181.6M200.0 177.5L200.0 181.6"/><path class="d" d="M164.6 198.0L200.0 177.5M164.6 202.0L129.3 181.6M164.6 202.0L200.0 181.6M164.6 198.0L164.6 202.0"/>
<path fill="#808080" stroke="none" d="M200.0 177.5L235.4 198.0L235.4 202.0L200.0 222.5L164.6 202.0L164.6 198.0Z"/><path d="M235.4 198.0L200.0 177.5L164.6 198.0L200.0 218.4M164.6 198.0L164.6 202.0M235.4 198.0L235.4 202.0"/><path class="d" d="M200.0 218.4L235.4 198.0M200.0 222.5L164.6 202.0M200.0 222.5L235.4 202.0M200.0 218.4L200.0 222.5"/>
<path fill="#80b2b2" stroke="none" d="M270.7 177.5L306.1 198.0L306.1 202.0L270.7 222.5L235.4 202.0L235.4 198.0Z"/><path d="M306.1 198.0L270.7 177.5L235.4 198.0L270.7 218.4M235.4 198.0L235.4 202.0M306.1 198.0L306.1 202.0"/><path class="d" d="M270.7 218.4L306.1 198.0M270.7 222.5L235.4 202.0M270.7 222.5L306.1 202.0M270.7 218.4L270.7 222.5"/>
<path fill="#8080b2" stroke="none" d="M235.4 198.0L270.7 218.4L270.7 222.5L235.4 242.9L200.0 222.5L200.0 218.4Z"/><path d="M270.7 218.4L235.4 198.0L200.0 218.4L235.4 238.8M200.0 218.4L200.0 222.5M270.7 218.4L270.7 222.5"/><path class="d" d="M235.4 238.8L270.7 218.4M235.4 242.9L200.0 222.5M235.4 242.9L270.7 222.5M235.4 238.8L235.4 242.9"/>
<path fill="#804eb2" stroke="none" d="M200.0 218.4L235.4 238.8L235.4 242.9L200.0 263.3L164.6 242.9L164.6 238.8Z"/><path d="M235.4 238.8L200.0 218.4L164.6 238.8L200.0 259.2M164.6 238.8L164.6 242.9M235.4 238.8L235.4 242.9"/><path class="d" d="M200.0 259.2L235.4 238.8M200.0 263.3L164.6 242.9M200.0 263.3L235.4 242.9M200.0 259.2L200.0 263.3"/>
<path fill="#76804e" stroke="none" d="M164.6 149.0L200.0 169.4L200.0 173.5L164.6 193.9L129.3 173.5L129.3 169.4Z"/><path d="M200.0 169.4L164.6 149.0L129.3 169.4L164.6 189.8M129.3 169.4L129.3 173.5M200.0 169.4L200.0 173.5"/><path class="d" d="M164.6 189.8L200.0 169.4M164.6 193.9L129.3 173.5M164.6 193.9L200.0 173.5M164.6 189.8L164.6 193.9"/>
<path fill="#76b280" stroke="none" d="M235.4 149.0L270.7 169.4L270.7 173.5L235.4 193.9L200.0 173.5L200.0 169.4Z"/><path d="M270.7 169.4L235.4 149.0L200.0 169.4L235.4 189.8M200.0 169.4L200.0 173.5M270.7 169.4L270.7 173.5"/><path class="d" d="M235.4 189.8L270.7 169.4M235.4 193.9L200.0 173.5M235.4 193.9L270.7 173.5M235.4 189.8L235.4 193.9"/>
<path fill="#768080" stroke="none" d="M200.0 169.4L235.4 189.8L235.4 193.9L200.0 214.3L164.6 193.9L164.6 189.8Z"/><path d="M235.4 189.8L200.0 169.4L164.6 189.8L200.0 210.2M164.6 189.8L164.6 193.9M235.4 189.8L235.4 193.9"/><path class="d" d="M200.0 210.2L235.4 189.8M200.0 214.3L164.6 193.9M200.0 214.3L235.4 193.9M200.0 210.2L200.0 214.3"/>
<path fill="#7680b2" stroke="none" d="M235.4 189.8L270.7 210.2L270.7 214.3L235.4 234.7L200.0 214.3L200.0 210.2Z"/><path d="M270.7 210.2L235.4 189.8L200.0 210.2L235.4 230.6M200.0 210.2L200.0 214.3M270.7 210.2L270.7 214.3"/><path class="d" d="M235.4 230.6L270.7 210.2M235.4 234.7L200.0 214.3M235.4 234.7L270.7 214.3M235.4 230.6L235.4 234.7"/>
<path fill="#764eb2" stroke="none" d="M200.0 210.2L235.4 230.6L235.4 234.7L200.0 255.1L164.6 234.7L164.6 230.6Z"/><path d="M235.4 230.6L200.0 210.2L164.6 230.6L200.0 251.0M164.6 230.6L164.6 234.7M235.4 230.6L235.4 234.7"/><path class="d" d="M200.0 251.0L235.4 230.6M200.0 255.1L164.6 234.7M200.0 255.1L235.4 234.7M200.0 251.0L200.0 255.1"/>
<path fill="#6cb24e" stroke="none" d="M200.0 120.4L235.4 140.8L235.4 144.9L200.0 165.3L164.6 144.9L164.6 140.8Z"/><path d="M235.4 140.8L200.0 120.4L164.6 140.8L200.0 161.2M164.6 140.8L164.6 144.9M235.4 140.8L235.4 144.9"/><path class="d" d="M200.0 161.2L235.4 140.8M200.0 165.3L164.6 144.9M200.0 165.3L235.4 144.9M200.0 161.2L200.0 165.3"/>
<path fill="#6c804e" stroke="none" d="M164.6 140.8L200.0 161.2L200.0 165.3L164.6 185.7L129.3 165.3L129.3 161.2Z"/><path d="M200.0 161.2L164.6 140.8L129.3 161.2L164.6 181.6M129.3 161.2L129.3 165.3M200.0 161.2L200.0 165.3"/><path class="d" d="M164.6 181.6L200.0 161.2M164.6 185.7L129.3 165.3M164.6 185.7L200.0 165.3M164.6 181.6L164.6 185.7"/>
<path fill="#6c8080" stroke="none" d="M200.0 161.2L235.4 181.6L235.4 185.7L200.0 206.1L164.6 185.7L164.6 181.6Z"/><path d="M235.4 181.6L200.0 161.2L164.6 181.6L200.0 202.0M164.6 181.6L164.6 185.7M235.4 181.6L235.4 185.7"/><path class="d" d="M200.0 202.0L235.4 181.6M200.0 206.1L164.6 185.7M200.0 206.1L235.4 185.7M200.0 202.0L200.0 206.1"/>
<path fill="#6c80b2" stroke="none" d="M235.4 181.6L270.7 202.0L270.7 206.1L235.4 226.5L200.0 206.1L200.0 202.0Z"/><path d="M270.7 202.0L235.4 181.6L200.0 202.0L235.4 222.5M200.0 202.0L200.0 206.1M270.7 202.0L270.7 206.1"/><path class="d" d="M235.4 222.5L270.7 202.0M235.4 226.5L200.0 206.1M235.4 226.5L270.7 206.1M235.4 222.5L235.4 226.5"/>
<path fill="#6c4eb2" stroke="none" d="M200.0 202.0L235.4 222.5L235.4 226.5L200.0 246.9L164.6 226.5L164.6 222.5Z"/><path d="M235.4 222.5L200.0 202.0L164.6 222.5L200.0 242.9M164.6 222.5L164.6 226.5M235.4 222.5L235.4 226.5"/><path class="d" d="M200.0 242.9L235.4 222.5M200.0 246.9L164.6 226.5M200.0 246.9L235.4 226.5M200.0 242.9L200.0 246.9"/>
<path fill="#62b24e" stroke="none" d="M200.0 112.2L235.4 132.6L235.4 136.7L200.0 157.1L164.6 136.7L164.6 132.6Z"/><path d="M235.4 132.6L200.0 112.2L164.6 132.6L200.0 153.1M164.6 132.6L164.6 136.7M235.4 132.6L235.4 136.7"/><path class="d" d="M200.0 153.1L235.4 132.6M200.0 157.1L164.6 136.7M200.0 157.1L235.4 136.7M200.0 153.1L200.0 157.1"/>
<path fill="#62b280" stroke="none" d="M235.4 132.6L270.7 153.1L270.7 157.1L235.4 177.5L200.0 157.1L200.0 153.1Z"/><path d="M270.7 153.1L235.4 132.6L200.0 153.1L235.4 173.5M200.0 153.1L200.0 157.1M270.7 153.1L270.7 157.1"/><path class="d" d="M235.4 173.5L270.7 153.1M235.4 177.5L200.0 157.1M235.4 177.5L270.7 157.1M235.4 173.5L235.4 177.5"/>
<path fill="#62b2b2" stroke="none" d="M270.7 153.1L306.1 173.5L306.1 177.5L270.7 198.0L235.4 177.5L235.4 173.5Z"/><path d="M306.1 173.5L270.7 153.1L235.4 173.5L270.7 193.9M235.4 173.5L235.4 177.5M306.1 173.5L306.1 177.5"/><path class="d" d="M270.7 193.9L306.1 173.5M270.7 198.0L235.4 177.5M270.7 198.0L306.1 177.5M270.7 193.9L270.7 198.0"/>
<path fill="#624e80" stroke="none" d="M164.6 173.5L200.0 193.9L200.0 198.0L164.6 218.4L129.3 198.0L129.3 193.9Z"/><path d="M200.0 193.9L164.6 173.5L129.3 193.9L164.6 214.3M129.3 193.9L129.3 198.0M200.0 193.9L200.0 198.0"/><path class="d" d="M164.6 214.3L200.0 193.9M164.6 218.4L129.3 198.0M164.6 218.4L200.0 198.0M164.6 214.3L164.6 218.4"/>
<path fill="#6280b2" stroke="none" d="M235.4 173.5L270.7 193.9L270.7 198.0L235.4 218.4L200.0 198.0L200.0 193.9Z"/><path d="M270.7 193.9L235.4 173.5L200.0 193.9L235.4 214.3M200.0 193.9L200.0 198.0M270.7 193.9L270.7 198.0"/><path class="d" d="M235.4 214.3L270.7 193.9M235.4 218.4L200.0 198.0M235.4 218.4L270.7 198.0M235.4 214.3L235.4 218.4"/>
<path fill="#58b24e" stroke="none" d="M200.0 104.1L235.4 124.5L235.4 128.6L200.0 149.0L164.6 128.6L164.6 124.5Z"/><path d="M235.4 124.5L200.0 104.1L164.6 124.5L200.0 144.9M164.6 124.5L164.6 128.6M235.4 124.5L235.4 128.6"/><path class="d" d="M200.0 144.9L235.4 124.5M200.0 149.0L164.6 128.6M200.0 149.0L235.4 128.6M200.0 144.9L200.0 149.0"/>
<path fill="#58b280" stroke="none" d="M235.4 124.5L270.7 144.9L270.7 149.0L235.4 169.4L200.0 149.0L200.0 144.9Z"/><path d="M270.7 144.9L235.4 124.5L200.0 144.9L235.4 165.3M200.0 144.9L200.0 149.0M270.7 144.9L270.7 149.0"/><path class="d" d="M235.4 165.3L270.7 144.9M235.4 169.4L200.0 149.0M235.4 169.4L270.7 149.0M235.4 165.3L235.4 169.4"/>
<path fill="#588080" stroke="none" d="M200.0 144.9L235.4 165.3L235.4 169.4L200.0 189.8L164.6 169.4L164.6 165.3Z"/><path d="M235.4 165.3L200.0 144.9L164.6 165.3L200.0 185.7M164.6 165.3L164.6 169.4M235.4 165.3L235.4 169.4"/><path class="d" d="M200.0 185.7L235.4 165.3M200.0 189.8L164.6 169.4M200.0 189.8L235.4 169.4M200.0 185.7L200.0 189.8"/>
<path fill="#58b2b2" stroke="none" d="M270.7 144.9L306.1 165.3L306.1 169.4L270.7 189.8L235.4 169.4L235.4 165.3Z"/><path d="M306.1 165.3L270.7 144.9L235.4 165.3L270.7 185.7M235.4 165.3L235.4 169.4M306.1 165.3L306.1 169.4"/><path class="d" d="M270.7 185.7L306.1 165.3M270.7 189.8L235.4 169.4M270.7 189.8L306.1 169.4M270.7 185.7L270.7 189.8"/>
<path fill="#584e80" stroke="none" d="M164.6 165.3L200.0 185.7L200.0 189.8L164.6 210.2L129.3 189.8L129.3 185.7Z"/><path d="M200.0 185.7L164.6 165.3L129.3 185.7L164.6 206.1M129.3 185.7L129.3 189.8M200.0 185.7L200.0 189.8"/><path class="d" d="M164.6 206.1L200.0 185.7M164.6 210.2L129.3 189.8M164.6 210.2L200.0 189.8M164.6 206.1L164.6 210.2"/>
<path fill="#4eb280" stroke="none" d="M235.4 116.3L270.7 136.7L270.7 140.8L235.4 161.2L200.0 140.8L200.0 136.7Z"/><path d="M270.7 136.7L235.4 116.3L200.0 136.7L235.4 157.1M200.0 136.7L200.0 140.8M270.7 136.7L270.7 140.8"/><path class="d" d="M235.4 157.1L270.7 136.7M235.4 161.2L200.0 140.8M235.4 161.2L270.7 140.8M235.4 157.1L235.4 161.2"/>
<path fill="#4e8080" stroke="none" d="M200.0 136.7L235.4 157.1L235.4 161.2L200.0 181.6L164.6 161.2L164.6 157.1Z"/><path d="M235.4 157.1L200.0 136.7L164.6 157.1L200.0 177.5M164.6 157.1L164.6 161.2M235.4 157.1L235.4 161.2"/><path class="d" d="M200.0 177.5L235.4 157.1M200.0 181.6L164.6 161.2M200.0 181.6L235.4 161.2M200.0 177.5L200.0 181.6"/>
<path fill="#4eb2b2" stroke="none" d="M270.7 136.7L306.1 157.1L306.1 161.2L270.7 181.6L235.4 161.2L235.4 157.1Z"/><path d="M306.1 157.1L270.7 136.7L235.4 157.1L270.7 177.5M235.4 157.1L235.4 161.2M306.1 157.1L306.1 161.2"/><path class="d" d="M270.7 177.5L306.1 157.1M270.7 181.6L235.4 161.2M270.7 181.6L306.1 161.2M270.7 177.5L270.7 181.6"/>
<path fill="#4e4e80" stroke="none" d="M164.6 157.1L200.0 177.5L200.0 181.6L164.6 202.0L129.3 181.6L129.3 177.5Z"/><path d="M200.0 177.5L164.6 157.1L129.3 177.5L164.6 198.0M129.3 177.5L129.3 181.6M200.0 177.5L200.0 181.6"/><path class="d" d="M164.6 198.0L200.0 177.5M164.6 202.0L129.3 181.6M164.6 202.0L200.0 181.6M164.6 198.0L164.6 202.0"/>
<path fill="#4e80b2" stroke="none" d="M235.4 157.1L270.7 177.5L270.7 181.6L235.4 202.0L200.0 181.6L200.0 177.5Z"/><path d="M270.7 177.5L235.4 157.1L200.0 177.5L235.4 198.0M200.0 177.5L200.0 181.6M270.7 177.5L270.7 181.6"/><path class="d" d="M235.4 198.0L270.7 177.5M235.4 202.0L200.0 181.6M235.4 202.0L270.7 181.6M235.4 198.0L235.4 202.0"/>
<path fill="#44b24e" stroke="none" d="M200.0 87.7L235.4 108.1L235.4 112.2L200.0 132.6L164.6 112.2L164.6 108.1Z"/><path d="M235.4 108.1L200.0 87.7L164.6 108.1L200.0 128.6M164.6 108.1L164.6 112.2M235.4 108.1L235.4 112.2"/><path class="d" d="M200.0 128.6L235.4 108.1M200.0 132.6L164.6 112.2M200.0 132.6L235.4 112.2M200.0 128.6L200.0 132.6"/>
<path fill="#448080" stroke="none" d="M200.0 128.6L235.4 149.0L235.4 153.1L200.0 173.5L164.6 153.1L164.6 149.0Z"/><path d="M235.4 149.0L200.0 128.6L164.6 149.0L200.0 169.4M164.6 149.0L164.6 153.1M235.4 149.0L235.4 153.1"/><path class="d" d="M200.0 169.4L235.4 149.0M200.0 173.5L164.6 153.1M200.0 173.5L235.4 153.1M200.0 169.4L200.0 173.5"/>
<path fill="#44b2b2" stroke="none" d="M270.7 128.6L306.1 149.0L306.1 153.1L270.7 173.5L235.4 153.1L235.4 149.0Z"/><path d="M306.1 149.0L270.7 128.6L235.4 149.0L270.7 169.4M235.4 149.0L235.4 153.1M306.1 149.0L306.1 153.1"/><path class="d" d="M270.7 169.4L306.1 149.0M270.7 173.5L235.4 153.1M270.7 173.5L306.1 153.1M270.7 169.4L270.7 173.5"/>
<path fill="#444e80" stroke="none" d="M164.6 149.0L200.0 169.4L200.0 173.5L164.6 193.9L129.3 173.5L129.3 169.4Z"/><path d="M200.0 169.4L164.6 149.0L129.3 169.4L164.6 189.8M129.3 169.4L129.3 173.5M200.0 169.4L200.0 173.5"/><path class="d" d="M164.6 189.8L200.0 169.4M164.6 193.9L129.3 173.5M164.6 193.9L200.0 173.5M164.6 189.8L164.6 193.9"/>
<path fill="#4480b2" stroke="none" d="M235.4 149.0L270.7 169.4L270.7 173.5L235.4 193.9L200.0 173.5L200.0 169.4Z"/><path d="M270.7 169.4L235.4 149.0L200.0 169.4L235.4 189.8M200.0 169.4L200.0 173.5M270.7 169.4L270.7 173.5"/><path class="d" d="M235.4 189.8L270.7 169.4M235.4 193.9L200.0 173.5M235.4 193.9L270.7 173.5M235.4 189.8L235.4 193.9"/>
<path fill="#3ab24e" stroke="none" d="M200.0 79.6L235.4 100.0L235.4 104.1L200.0 124.5L164.6 104.1L164.6 100.0Z"/><path d="M235.4 100.0L200.0 79.6L164.6 100.0L200.0 120.4M164.6 100.0L164.6 104.1M235.4 100.0L235.4 104.1"/><path class="d" d="M200.0 120.4L235.4 100.0M200.0 124.5L164.6 104.1M200.0 124.5L235.4 104.1M200.0 120.4L200.0 124.5"/>
<path fill="#3ab280" stroke="none" d="M235.4 100.0L270.7 120.4L270.7 124.5L235.4 144.9L200.0 124.5L200.0 120.4Z"/><path d="M270.7 120.4L235.4 100.0L200.0 120.4L235.4 140.8M200.0 120.4L200.0 124.5M270.7 120.4L270.7 124.5"/><path class="d" d="M235.4 140.8L270.7 120.4M235.4 144.9L200.0 124.5M235.4 144.9L270.7 124.5M235.4 140.8L235.4 144.9"/>
<path fill="#3a8080" stroke="none" d="M200.0 120.4L235.4 140.8L235.4 144.9L200.0 165.3L164.6 144.9L164.6 140.8Z"/><path d="M235.4 140.8L200.0 120.4L164.6 140.8L200.0 161.2M164.6 140.8L164.6 144.9M235.4 140.8L235.4 144.9"/><path class="d" d="M200.0 161.2L235.4 140.8M200.0 165.3L164.6 144.9M200.0 165.3L235.4 144.9M200.0 161.2L200.0 165.3"/>
<path fill="#3a4e80" stroke="none" d="M164.6 140.8L200.0 161.2L200.0 165.3L164.6 185.7L129.3 165.3L129.3 161.2Z"/><path d="M200.0 161.2L164.6 140.8L129.3 161.2L164.6 181.6M129.3 161.2L129.3 165.3M200.0 161.2L200.0 165.3"/><path class="d" d="M164.6 181.6L200.0 161.2M164.6 185.7L129.3 165.3M164.6 185.7L200.0 165.3M164.6 181.6L164.6 185.7"/>
<path fill="#3a80b2" stroke="none" d="M235.4 140.8L270.7 161.2L270.7 165.3L235.4 185.7L200.0 165.3L200.0 161.2Z"/><path d="M270.7 161.2L235.4 140.8L200.0 161.2L235.4 181.6M200.0 161.2L200.0 165.3M270.7 161.2L270.7 165.3"/><path class="d" d="M235.4 181.6L270.7 161.2M235.4 185.7L200.0 165.3M235.4 185.7L270.7 165.3M235.4 181.6L235.4 185.7"/>
<path fill="#30b24e" stroke="none" d="M200.0 71.4L235.4 91.8L235.4 95.9L200.0 116.3L164.6 95.9L164.6 91.8Z"/><path d="M235.4 91.8L200.0 71.4L164.6 91.8L200.0 112.2M164.6 91.8L164.6 95.9M235.4 91.8L235.4 95.9"/><path class="d" d="M200.0 112.2L235.4 91.8M200.0 116.3L164.6 95.9M200.0 116.3L235.4 95.9M200.0 112.2L200.0 116.3"/>
<path fill="#30804e" stroke="none" d="M164.6 91.8L200.0 112.2L200.0 116.3L164.6 136.7L129.3 116.3L129.3 112.2Z"/><path d="M200.0 112.2L164.6 91.8L129.3 112.2L164.6 132.6M129.3 112.2L129.3 116.3M200.0 112.2L200.0 116.3"/><path class="d" d="M164.6 132.6L200.0 112.2M164.6 136.7L129.3 116.3M164.6 136.7L200.0 116.3M164.6 132.6L164.6 136.7"/>
<path fill="#30b280" stroke="none" d="M235.4 91.8L270.7 112.2L270.7 116.3L235.4 136.7L200.0 116.3L200.0 112.2Z"/><path d="M270.7 112.2L235.4 91.8L200.0 112.2L235.4 132.6M200.0 112.2L200.0 116.3M270.7 112.2L270.7 116.3"/><path class="d" d="M235.4 132.6L270.7 112.2M235.4 136.7L200.0 116.3M235.4 136.7L270.7 116.3M235.4 132.6L235.4 136.7"/>
<path fill="#30b2b2" stroke="none" d="M270.7 112.2L306.1 132.6L306.1 136.7L270.7 157.1L235.4 136.7L235.4 132.6Z"/><path d="M306.1 132.6L270.7 112.2L235.4 132.6L270.7 153.1M235.4 132.6L235.4 136.7M306.1 132.6L306.1 136.7"/><path class="d" d="M270.7 153.1L306.1 132.6M270.7 157.1L235.4 136.7M270.7 157.1L306.1 136.7M270.7 153.1L270.7 157.1"/>
<path fill="#304e80" stroke="none" d="M164.6 132.6L200.0 153.1L200.0 157.1L164.6 177.5L129.3 157.1L129.3 153.1Z"/><path d="M200.0 153.1L164.6 132.6L129.3 153.1L164.6 173.5M129.3 153.1L129.3 157.1M200.0 153.1L200.0 157.1"/><path class="d" d="M164.6 173.5L200.0 153.1M164.6 177.5L129.3 157.1M164.6 177.5L200.0 157.1M164.6 173.5L164.6 177.5"/>
<path fill="#26804e" stroke="none" d="M164.6 83.6L200.0 104.1L200.0 108.1L164.6 128.6L129.3 108.1L129.3 104.1Z"/><path d="M200.0 104.1L164.6 83.6L129.3 104.1L164.6 124.5M129.3 104.1L129.3 108.1M200.0 104.1L200.0 108.1"/><path class="d" d="M164.6 124.5L200.0 104.1M164.6 128.6L129.3 108.1M164.6 128.6L200.0 108.1M164.6 124.5L164.6 128.6"/>
<path fill="#26b280" stroke="none" d="M235.4 83.6L270.7 104.1L270.7 108.1L235.4 128.6L200.0 108.1L200.0 104.1Z"/><path d="M270.7 104.1L235.4 83.6L200.0 104.1L235.4 124.5M200.0 104.1L200.0 108.1M270.7 104.1L270.7 108.1"/><path class="d" d="M235.4 124.5L270.7 104.1M235.4 128.6L200.0 108.1M235.4 128.6L270.7 108.1M235.4 124.5L235.4 128.6"/>
<path fill="#26b2b2" stroke="none" d="M270.7 104.1L306.1 124.5L306.1 128.6L270.7 149.0L235.4 128.6L235.4 124.5Z"/><path d="M306.1 124.5L270.7 104.1L235.4 124.5L270.7 144.9M235.4 124.5L235.4 128.6M306.1 124.5L306.1 128.6"/><path class="d" d="M270.7 144.9L306.1 124.5M270.7 149.0L235.4 128.6M270.7 149.0L306.1 128.6M270.7 144.9L270.7 149.0"/>
<path fill="#264e80" stroke="none" d="M164.6 124.5L200.0 144.9L200.0 149.0L164.6 169.4L129.3 149.0L129.3 144.9Z"/><path d="M200.0 144.9L164.6 124.5L129.3 144.9L164.6 165.3M129.3 144.9L129.3 149.0M200.0 144.9L200.0 149.0"/><path class="d" d="M164.6 165.3L200.0 144.9M164.6 169.4L129.3 149.0M164.6 169.4L200.0 149.0M164.6 165.3L164.6 169.4"/>
<path fill="#2680b2" stroke="none" d="M235.4 124.5L270.7 144.9L270.7 149.0L235.4 169.4L200.0 149.0L200.0 144.9Z"/><path d="M270.7 144.9L235.4 124.5L200.0 144.9L235.4 165.3M200.0 144.9L200.0 149.0M270.7 144.9L270.7 149.0"/><path class="d" d="M235.4 165.3L270.7 144.9M235.4 169.4L200.0 149.0M235.4 169.4L270.7 149.0M235.4 165.3L235.4 169.4"/>
<path fill="#1cb24e" stroke="none" d="M200.0 55.1L235.4 75.5L235.4 79.6L200.0 100.0L164.6 79.6L164.6 75.5Z"/><path d="M235.4 75.5L200.0 55.1L164.6 75.5L200.0 95.9M164.6 75.5L164.6 79.6M235.4 75.5L235.4 79.6"/><path class="d" d="M200.0 95.9L235.4 75.5M200.0 100.0L164.6 79.6M200.0 100.0L235.4 79.6M200.0 95.9L200.0 100.0"/>
<path fill="#1c804e" stroke="none" d="M164.6 75.5L200.0 95.9L200.0 100.0L164.6 120.4L129.3 100.0L129.3 95.9Z"/><path d="M200.0 95.9L164.6 75.5L129.3 95.9L164.6 116.3M129.3 95.9L129.3 100.0M200.0 95.9L200.0 100.0"/><path class="d" d="M164.6 116.3L200.0 95.9M164.6 120.4L129.3 100.0M164.6 120.4L200.0 100.0M164.6 116.3L164.6 120.4"/>
<path fill="#1cb2b2" stroke="none" d="M270.7 95.9L306.1 116.3L306.1 120.4L270.7 140.8L235.4 120.4L235.4 116.3Z"/><path d="M306.1 116.3L270.7 95.9L235.4 116.3L270.7 136.7M235.4 116.3L235.4 120.4M306.1 116.3L306.1 120.4"/><path class="d" d="M270.7 136.7L306.1 116.3M270.7 140.8L235.4 120.4M270.7 140.8L306.1 120.4M270.7 136.7L270.7 140.8"/>
<path fill="#1c4e80" stroke="none" d="M164.6 116.3L200.0 136.7L200.0 140.8L164.6 161.2L129.3 140.8L129.3 136.7Z"/><path d="M200.0 136.7L164.6 116.3L129.3 136.7L164.6 157.1M129.3 136.7L129.3 140.8M200.0 136.7L200.0 140.8"/><path class="d" d="M164.6 157.1L200.0 136.7M164.6 161.2L129.3 140.8M164.6 161.2L200.0 140.8M164.6 157.1L164.6 161.2"/>
<path fill="#1c80b2" stroke="none" d="M235.4 116.3L270.7 136.7L270.7 140.8L235.4 161.2L200.0 140.8L200.0 136.7Z"/><path d="M270.7 136.7L235.4 116.3L200.0 136.7L235.4 157.1M200.0 136.7L200.0 140.8M270.7 136.7L270.7 140.8"/><path class="d" d="M235.4 157.1L270.7 136.7M235.4 161.2L200.0 140.8M235.4 161.2L270.7 140.8M235.4 157.1L235.4 161.2"/>
    </g>
  </svg>
</div>
</body>
</html>
